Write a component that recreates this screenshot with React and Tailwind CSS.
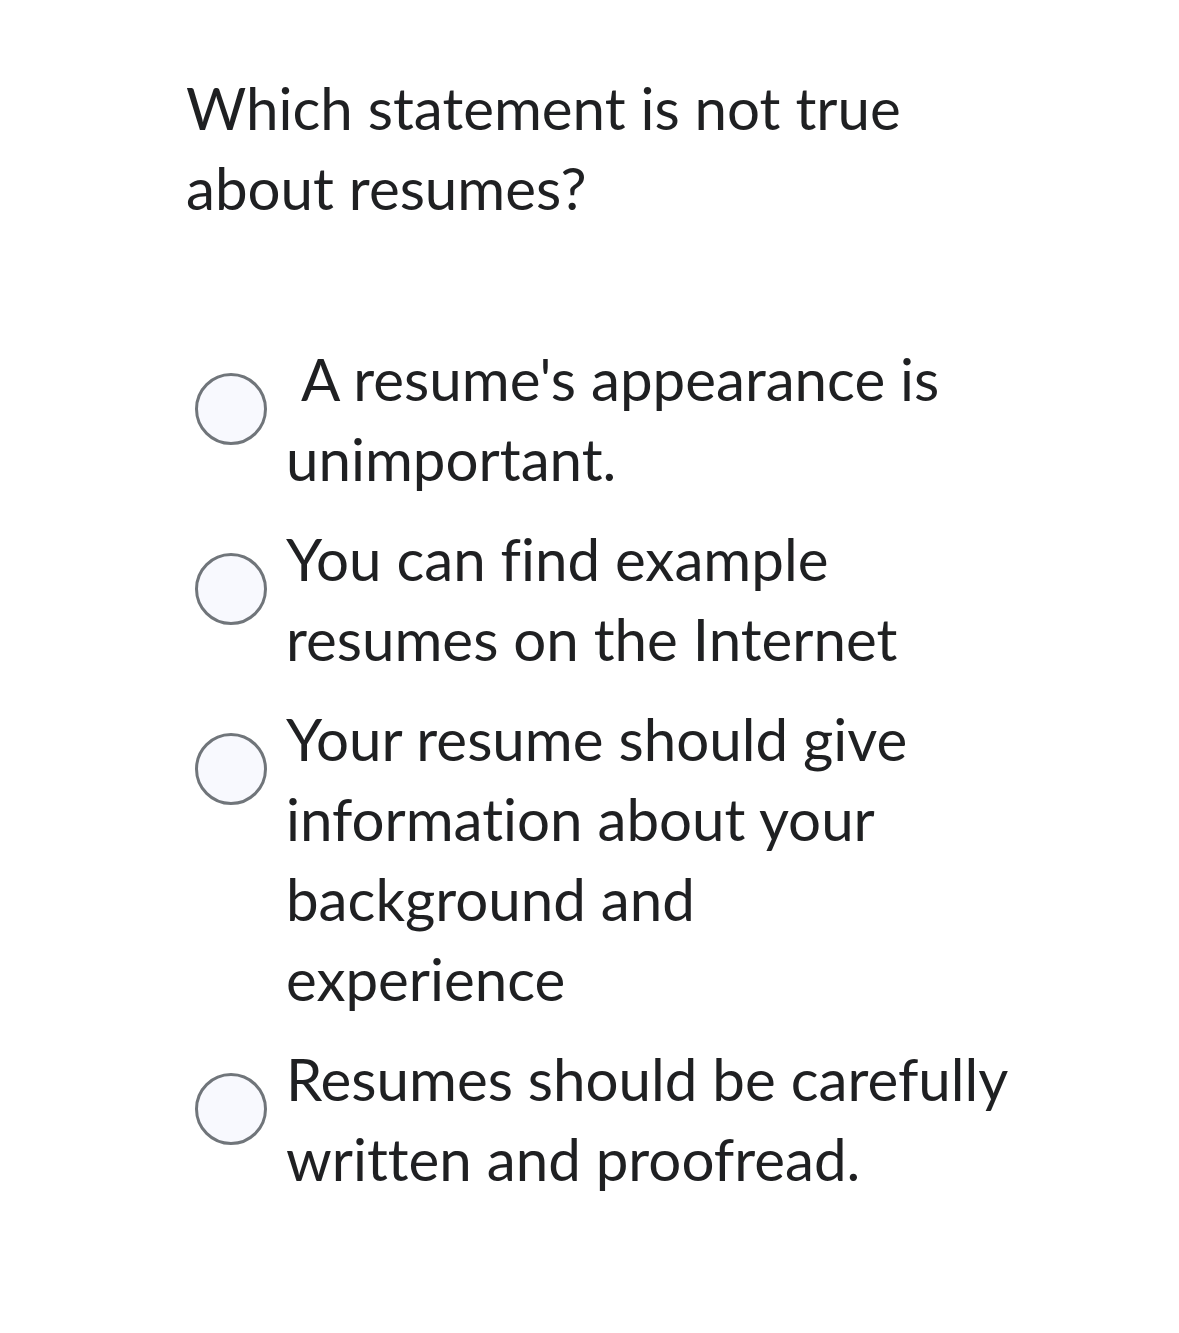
export default function App() {
  const options = [
    [" A resume's appearance is unimportant."],
    ["You can find example resumes on the Internet"],
    ["Your resume should give information about your background and", "experience"],
    ["Resumes should be carefully written and proofread."],
  ];
  return (
    <div className="min-h-[1333px] w-[1179px] bg-white text-[#1f2022] [font-variant-ligatures:none]" style={{ fontFamily: "Lato, 'Noto Sans', sans-serif" }}>
      <div className="pl-[186px] pt-[68px]">
        <p className="w-[760px] text-[58.25px] leading-[80px]">Which statement is not true about resumes?</p>
        <div className="mt-[111px] flex flex-col gap-[20px]">
          {options.map((o, i) => (
            <div key={i} className="flex items-start">
              <div className="ml-[9px] mt-[34px] h-[72px] w-[72px] shrink-0 rounded-full border-[3px] border-[#70757a] bg-[#f8f9fe]" />
              <p className="ml-[19px] w-[740px] whitespace-pre-wrap text-[58.25px] leading-[80px]">
                {o.map((l, j) => (
                  <span key={j}>
                    {j > 0 && <br />}
                    {l}
                  </span>
                ))}
              </p>
            </div>
          ))}
        </div>
      </div>
    </div>
  );
}
